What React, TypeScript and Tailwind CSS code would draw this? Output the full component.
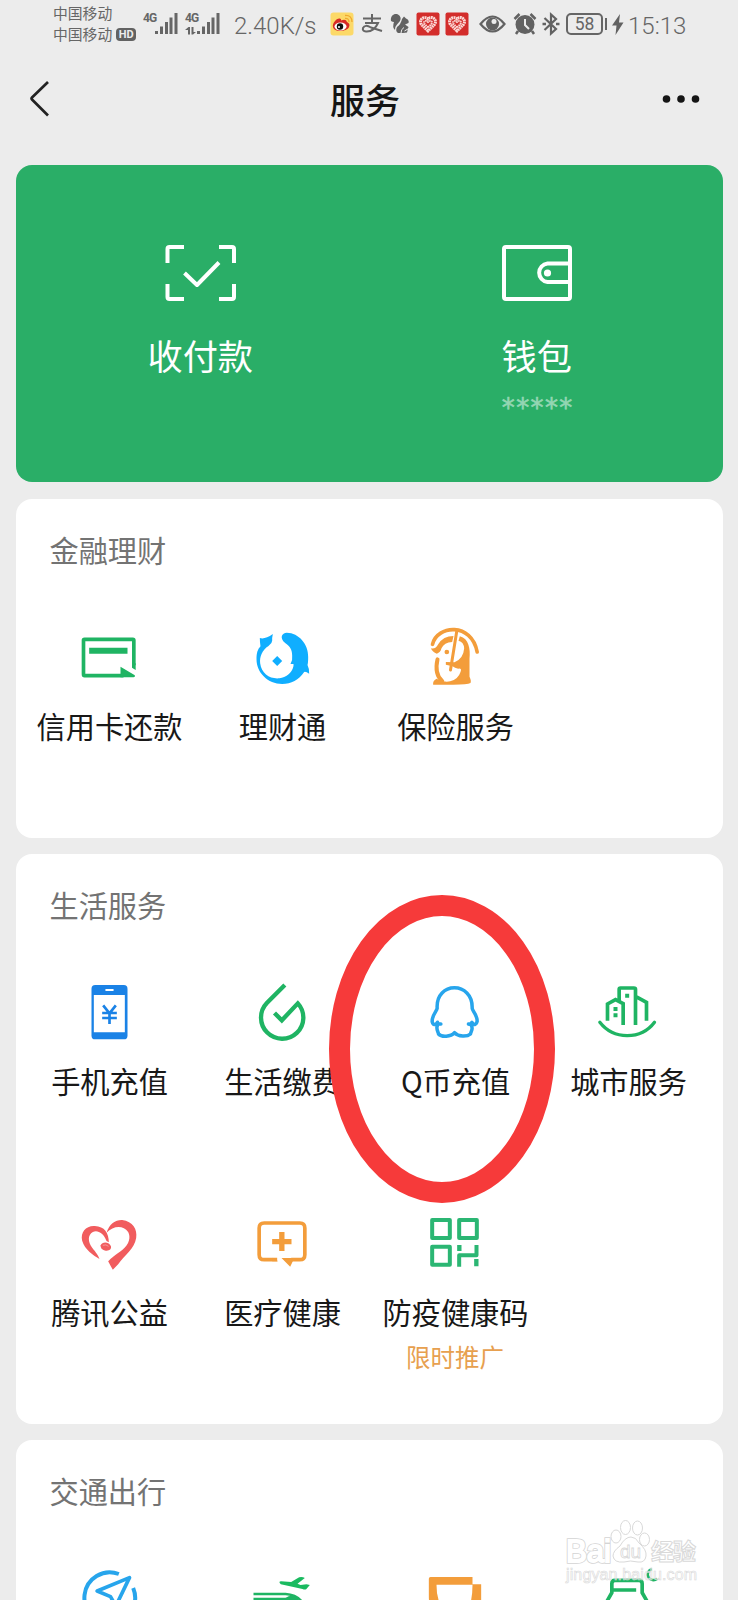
import type { ReactNode } from 'react';

interface IconProps {
    viewBox: string;
    children: ReactNode;
}

interface Service {
    id: string;
    name?: string;
    icon: ReactNode;
    note?: string;
}

interface SectionProps {
    title: string;
    items: Service[];
}

const GREEN = '#1fb463';
const ORANGE = '#f39d3b';
const BLUE = '#27a5ec';

function Icon({ viewBox, children }: IconProps) {
    return (
        <svg className="w-[72px] h-[72px] shrink-0" viewBox={viewBox} fill="none">
            {children}
        </svg>
    );
}

const finance: Service[] = [
    {
        id: 'credit',
        name: '信用卡还款',
        icon: (
            <Icon viewBox="160.5 63 216 216">
                <path d="M343 196V121q0-3-3-3H195q-3 0-3 3V223q0 4 3 4H312" stroke={GREEN} strokeWidth="11" />
                <path d="M209 143H324V161H209zM303 200L346 226Q348 232 342 232H303z" fill={GREEN} />
                <path d="M337.500 190V203L348.500 210V190z" fill={GREEN} />
            </Icon>
        ),
    },
    {
        id: 'licaitong',
        name: '理财通',
        icon: (
            <Icon viewBox="679.5 63 216 216">
                <path
                    d="M721 114Q736 119 760 102Q757 116 758 122Q758 130 747 138C728 150 720 170 722 190C726 222 752 238 780 235C800 232 815 220 820 205Q823 199 822 192L813 192Q820 180 818 167C818 147 811 140 797 129C779 114 787 98 802 98C838 99 867 132 866 171Q866 190 864 195Q869 204 869 221Q859 214 854 216C838 240 815 252 788 252C745 252 711 218 711 178C711 158 715 148 723 139Q721 128 721 114z"
                    fill="#10aeff"
                />
                <path d="M773 168L788 183L773 198L758 183z" fill="#10aeff" />
            </Icon>
        ),
    },
    {
        id: 'insurance',
        name: '保险服务',
        icon: (
            <Icon viewBox="148.5 63 216 216">
                <path d="M189 133C203 75 306 66 323 156" stroke={ORANGE} strokeWidth="11" strokeLinecap="round" />
                <path d="M262 92L243 210" stroke={ORANGE} strokeWidth="9" strokeLinecap="round" />
                <path d="M204 178Q194 222 218 243" stroke={ORANGE} strokeWidth="12" strokeLinecap="round" />
                <path
                    d="M184 145Q199 148 206 133Q221 108 252 108L248 126Q224 127 216 145Q213 158 202 161Q189 157 184 145z"
                    fill={ORANGE}
                />
                <path
                    d="M271 109C298 116 303 147 300 176V230Q306 242 303 249Q294 254 251 254H191Q189 242 201 236Q222 248 242 244Q266 238 273 216Q278 204 266 206Q256 205 249 199L229 194V186L255 187Q282 176 284 145Q283 126 267 122z"
                    fill={ORANGE}
                />
                <circle cx="232" cy="156" r="7" fill={ORANGE} />
            </Icon>
        ),
    },
];

const life: Service[] = [
    {
        id: 'phone',
        name: '手机充值',
        icon: (
            <Icon viewBox="130.5 48 216 216">
                <rect x="186" y="75" width="108" height="163" rx="11" fill="#1a82e6" />
                <path d="M193 105H286V217H193z" fill="#fff" />
                <path d="M230 90H250" stroke="#fff" strokeWidth="6" strokeLinecap="round" />
                <path d="M221 136L240 160L259 136M240 159V192M218 159H262M218 174H262" stroke="#1a82e6" strokeWidth="8" />
            </Icon>
        ),
    },
    {
        id: 'utilities',
        name: '生活缴费',
        icon: (
            <Icon viewBox="649.5 48 216 216">
                <path d="M766 75L712 129A63.500 63.500 0 1 0 805 130L757 181L735 159" stroke={GREEN} strokeWidth="13" />
            </Icon>
        ),
    },
    {
        id: 'qcoin',
        name: 'Q币充值',
        icon: (
            <Icon viewBox="118.5 48 216 216">
                <path
                    d="M184 192Q175 193 174 187Q163 201 158 185C157 166 172 153 173 145C168 63 281 63 278 145C278 153 293 162 293 184Q288 201 277 187Q275 194 267 192M174 196C168 207 177 216 177 222C186 232 214 231 225 218C236 231 263 231 273 222C273 216 283 207 275 196"
                    stroke={BLUE}
                    strokeWidth="10.5"
                    strokeLinecap="round"
                    strokeLinejoin="round"
                />
            </Icon>
        ),
    },
    {
        id: 'city',
        name: '城市服务',
        icon: (
            <Icon viewBox="637.5 48 216 216">
                <path d="M661 187Q692 227 743 227Q795 227 825 187" stroke={GREEN} strokeWidth="10" strokeLinecap="round" />
                <path
                    d="M684 182V132L708 119L731 131V195M719 121V88Q719 84 723 84H763Q768 84 768 88V195M768 109L801 127V182"
                    stroke={GREEN}
                    strokeWidth="11"
                />
                <path d="M737 101H749V113H737zM702 141H714V153H702zM702 160H714V172H702z" fill={GREEN} />
            </Icon>
        ),
    },
    {
        id: 'charity',
        name: '腾讯公益',
        icon: (
            <Icon viewBox="130.5 21 216 216">
                <path
                    d="M231 98C240 71 259 59 278 60C310 64 324 88 320 114C315 146 287 163 266 193L250 209Q244 200 236 184C244 174 261 163 279 149C300 132 304 111 296 96C281 75 252 77 231 98z"
                    fill="#f15c5e"
                />
                <path
                    d="M210 177C192 166 166 149 158 122C152 96 170 76 196 78C225 79 238 99 238 127L231 123C222 99 204 89 190 96C174 105 175 126 188 143C199 157 205 163 210 177z"
                    fill="#f15c5e"
                />
                <ellipse cx="229" cy="140" rx="16" ry="12" transform="rotate(15 229 140)" fill="#f15c5e" />
                <path d="M220 136Q230 132 237 139" stroke="#fbb5b5" strokeWidth="2" />
            </Icon>
        ),
    },
    {
        id: 'medical',
        name: '医疗健康',
        icon: (
            <Icon viewBox="649.5 21 216 216">
                <path
                    d="M743 179H704Q689 179 689 164V84Q689 69 704 69H811Q826 69 826 84V164Q826 179 811 179H785"
                    stroke={ORANGE}
                    strokeWidth="11"
                />
                <path d="M756 174H790V184L782 200zM730 173L746 184H728z" fill={ORANGE} />
                <path d="M749 96H765V117H786V133H765V153H749V133H728V117H749z" fill={ORANGE} />
            </Icon>
        ),
    },
    {
        id: 'healthcode',
        name: '防疫健康码',
        note: '限时推广',
        icon: (
            <Icon viewBox="178.5 51 216 216">
                <path d="M218 90H271V144H218zM299 90H352V144H299zM218 170H271V224H218z" stroke="#2bb673" strokeWidth="12" strokeLinejoin="round" />
                <path d="M299 230V196H351V165" stroke="#2bb673" strokeWidth="12" strokeLinejoin="round" />
                <path d="M293 165H306V183H293zM344 207H357V229H344z" fill="#2bb673" />
            </Icon>
        ),
    },
];

const travel: Service[] = [
    {
        id: 'trip',
        icon: (
            <Icon viewBox="130.5 306 216 216">
                <path d="M268 342A76 76 0 1 0 311 384" stroke={BLUE} strokeWidth="12" />
                <path d="M203 393L300 353L259 438L243 410z" stroke={BLUE} strokeWidth="11" strokeLinejoin="round" />
            </Icon>
        ),
    },
    {
        id: 'train',
        icon: (
            <Icon viewBox="649.5 306 216 216">
                <path d="M672 402H768Q802 404 820 428M672 417H778" stroke={GREEN} strokeWidth="7" />
                <path d="M768 414Q785 402 800 412L824 432H770z" fill={GREEN} />
                <path
                    d="M750 368Q749 364 755 364L785 366L809 352Q819 350 826 354L804 371L813 375L831 373L841 375L830 388Q825 390 819 387L754 373z"
                    fill="#1aba60"
                />
            </Icon>
        ),
    },
    {
        id: 'didi',
        icon: (
            <Icon viewBox="88.5 186 216 216">
                <path d="M123 231H249V253H275V300Q270 360 197 360Q118 360 118 290V236Q118 231 123 231zM141 254Q141 290 152 312Q165 338 197 338Q235 330 245 300Q249 280 249 254z" fill={ORANGE} fillRule="evenodd" />
            </Icon>
        ),
    },
    {
        id: 'hotel',
        icon: (
            <Icon viewBox="607.5 186 216 216">
                <path d="M650 308L667 278V251Q667 241 676 241H749Q758 241 758 251V278L775 308M667 270H740" stroke={GREEN} strokeWidth="11" />
                <path d="M787 207A17 17 0 1 0 803 236" stroke={GREEN} strokeWidth="8" />
            </Icon>
        ),
    },
];

function Signal() {
    return (
        <svg className="w-[24px] h-[22px]" viewBox="0 0 24 22" fill="#666">
            <path d="M1 18h3v3h-3zM6 13.500h3v7.500h-3zM11 9h3v12h-3zM15.500 4.500h3v16.500h-3zM20.500 0h3v21h-3z" />
        </svg>
    );
}

function CharityBadge() {
    return (
        <svg className="w-[24px] h-[24px]" viewBox="0 0 24 24">
            <rect x=".5" y=".5" width="23" height="23" rx="2" fill="#d32d2b" />
            <path d="M12 19L5.500 12.500C2.500 8.500 7 3 12 7C17 3 21.500 8.500 18.500 12.500z" fill="none" stroke="#fbd9d6" strokeWidth="3" strokeDasharray="1.800 .5" />
            <path d="M12 15.500L8.500 12C7 9.500 9.500 8 12 10C14.500 8 17 9.500 15.500 12z" fill="none" stroke="#fbd9d6" strokeWidth="2" strokeDasharray="1.500 .6" />
        </svg>
    );
}

function StatusBar() {
    return (
        <div className="flex items-start h-[48px] pl-[53px] text-[#666]">
            <div className="w-[90px] pt-[2px] text-[14.800px] leading-[21px] whitespace-nowrap">
                <div>中国移动</div>
                <div className="flex items-center">
                    <span>中国移动</span>
                    <span className="mt-px ml-[4px] w-[20px] h-[13px] rounded-[4px] bg-[#626262] text-[#ececec] text-[11px] leading-[13px] font-bold text-center font-['Roboto']">HD</span>
                </div>
            </div>
            <div className="flex w-[42px] pt-[13px]">
                <span className="w-[11px] text-[12px] leading-[10px] tracking-[-1px] font-bold font-['Roboto']">4G</span>
                <Signal />
            </div>
            <div className="flex w-[49px] pt-[13px]">
                <div className="w-[11px]">
                    <div className="text-[12px] leading-[10px] tracking-[-1px] font-bold font-['Roboto']">4G</div>
                    <svg className="mt-[4px] w-[11px] h-[8px]" viewBox="0 0 11 8" fill="#666">
                        <path d="M0 3L3.500 0H5V7.500H3V3zM6.500 0H8.500V5H11L8 7.500H6.500z" />
                    </svg>
                </div>
                <Signal />
            </div>
            <span className="w-[96px] pt-[11px] text-[24px] leading-[30px] font-light font-['Roboto'] whitespace-nowrap">2.40K/s</span>
            <svg className="mt-[12px] w-[24px] h-[24px]" viewBox="0 0 24 24">
                <rect x=".5" y=".5" width="23" height="23" rx="3" fill="#fcd968" />
                <path d="M3 15C2 11 7 5.500 10 6.500Q11.500 7 11 8.500Q16 6.500 17 10Q20.500 11.500 19 15C17 20 4 20.500 3 15z" fill="#d82b26" />
                <ellipse cx="10.500" cy="14.500" rx="6" ry="4" fill="#fff" />
                <circle cx="10" cy="14.500" r="3.200" fill="#111" />
                <circle cx="9" cy="15" r="1" fill="#fff" />
                <path d="M15 6.500Q19 6 19 10M15 3.500Q22 3 22 10" fill="none" stroke="#f0a82f" strokeWidth="1.300" />
            </svg>
            <svg className="mt-[14px] ml-[7px] w-[22px] h-[20px]" viewBox="0 0 22 20" fill="none" stroke="#666" strokeWidth="2">
                <path d="M2 4.500H20M11 0V8.500M4 9H17Q13 18 5 17.500Q1 17 2 14Q4 10 10 13.500L21 17" />
            </svg>
            <svg className="mt-[13px] ml-[7px] w-[20px] h-[21px]" viewBox="0 0 20 21" fill="#626262">
                <path d="M1 8C0 2 5 0 8 1.500Q12 4 10 8L7 11.500Q4.500 14 5 17Q2 14 4 9Q2.500 9 1 8z" />
                <path d="M12 6L14 3.500L16 5.500Q19.500 7 18.500 10L15 11.500L18.500 14L17 19.500L13 20H8Q5 18 7 14Q11 11 12 6z" />
                <path d="M11 20Q11 16 14 14.500M14.500 18L19.500 15" fill="none" stroke="#ececec" strokeWidth="1" />
            </svg>
            <div className="mt-[12px] ml-[6px] flex gap-[5px]">
                <CharityBadge />
                <CharityBadge />
            </div>
            <svg className="mt-[14px] ml-[10px] w-[27px] h-[20px]" viewBox="0 0 27 20">
                <path d="M1.500 10Q13.500-5 25.500 10Q13.500 25 1.500 10z" fill="none" stroke="#626262" strokeWidth="2.200" />
                <circle cx="13.500" cy="10" r="6.500" fill="#626262" />
                <circle cx="15" cy="7.500" r="2.500" fill="#ececec" />
            </svg>
            <svg className="mt-[12px] ml-[7px] w-[24px] h-[24px]" viewBox="0 0 24 24">
                <circle cx="12" cy="12.500" r="9.500" fill="#626262" />
                <path d="M1.500 7L6.500 2M22.500 7L17.500 2M5 19L3 22M19 19L21 22" stroke="#626262" strokeWidth="2.500" />
                <path d="M12 7V13L16 17" fill="none" stroke="#ececec" strokeWidth="2" />
            </svg>
            <svg className="mt-[12px] ml-[5px] w-[18px] h-[24px]" viewBox="0 0 18 24" fill="none" stroke="#626262" strokeWidth="2.200">
                <path d="M2.500 6L14 17L9 21.500V2.500L14 7L2.500 18" />
                <path d="M.5 12H4M14 12H17.500" strokeWidth="2.500" />
            </svg>
            <div className="mt-[13px] ml-[6px] w-[37px] h-[22px] rounded-[5px] border-2 border-[#666] text-[17.500px] leading-[19px] text-center font-['Roboto']">58</div>
            <div className="mt-[18px] ml-[2px] w-[2px] h-[12px] bg-[#666]" />
            <svg className="mt-[14px] ml-[5px] w-[12px] h-[21px]" viewBox="0 0 12 21" fill="#626262">
                <path d="M8 0L0 11.500H4.500L3.500 21L11.500 8.500H7z" />
            </svg>
            <span className="ml-[4px] pt-[11px] text-[24px] leading-[30px] font-light font-['Roboto']">15:13</span>
        </div>
    );
}

function NavBar() {
    return (
        <div className="flex items-center justify-between h-[102px] pl-[29px] pr-[37px]">
            <svg className="w-[42px] h-[36px]" viewBox="0 0 42 36" fill="none">
                <path d="M19 1L3 16.500Q2 17.500 3 18.500L19 34.500" stroke="#222" strokeWidth="2.700" />
            </svg>
            <h1 className="-mt-px text-[35px] leading-[44px] font-medium text-[#151515]">服务</h1>
            <svg className="w-[42px] h-[10px]" viewBox="0 0 42 10" fill="#151515">
                <circle cx="7.500" cy="5" r="3.800" />
                <circle cx="22" cy="5" r="3.800" />
                <circle cx="36.500" cy="5" r="3.800" />
            </svg>
        </div>
    );
}

function PayCard() {
    return (
        <div className="flex h-[317px] px-[17px] pt-[80px] rounded-[16px] bg-[#2aae67] text-white">
            <div className="flex-1 flex flex-col items-center">
                <svg className="w-[72px] h-[57px]" viewBox="0 0 72 57" fill="none" stroke="#fff" strokeWidth="4">
                    <path d="M2.500 18V4Q2.500 2 4.500 2H19M54 2H67Q69 2 69 4V18M69 39V52Q69 54 67 54H54M19 54H4.500Q2.500 54 2.500 52V39" />
                    <path d="M19.500 28L32 40L54 17.500" strokeLinejoin="round" />
                </svg>
                <div className="mt-[29px] -ml-px text-[35.200px] leading-[48px]">收付款</div>
            </div>
            <div className="flex-1 flex flex-col items-center">
                <svg className="w-[72px] h-[57px]" viewBox="0 0 72 57" fill="none" stroke="#fff" strokeWidth="4">
                    <rect x="3" y="2" width="66" height="52" rx="2" />
                    <path d="M69 18.500H46.500A9.300 9.300 0 0 0 46.500 37H69" />
                    <circle cx="46.500" cy="28" r="3.600" fill="#fff" stroke="none" />
                </svg>
                <div className="mt-[29px] -ml-px text-[35.200px] leading-[48px]">钱包</div>
                <div className="mt-[11px] pl-[1px] text-[26px] leading-[36px] tracking-[1.400px] text-[#94d6b3] [-webkit-text-stroke:0.6px_#94d6b3] font-['DejaVu_Sans']">*****</div>
            </div>
        </div>
    );
}

function Section({ title, items }: SectionProps) {
    return (
        <section className="rounded-[16px] bg-white pl-[7px] pr-[8px] pb-1">
            <h2 className="flex items-center h-[104px] pb-[3px] pl-[27px] text-[29.200px] text-[#737373]">{title}</h2>
            <div className="grid grid-cols-4 auto-rows-[231px]">
                {items.map((item) => (
                    <div key={item.id} className="flex flex-col items-center pt-[18px]">
                        {item.icon}
                        {item.name && <span className="mt-[12px] pl-px text-[29.200px] leading-[40px] text-[#181818] whitespace-nowrap">{item.name}</span>}
                        {item.note && <span className="mt-[10px] text-[24.500px] leading-[32px] text-[#e7a04f]">{item.note}</span>}
                    </div>
                ))}
            </div>
        </section>
    );
}

function Watermark() {
    return (
        <svg className="absolute left-[560px] top-[1515px] w-[145px] h-[75px]" viewBox="0 0 145 75" fill="#fff" stroke="#d9d9d9" strokeWidth="1">
            <g fontFamily="Liberation Sans, Noto Sans CJK SC, sans-serif" fontWeight="700">
                <text x="6" y="46.500" fontSize="31" fontWeight="400" textLength="45" lengthAdjust="spacingAndGlyphs" stroke="#d4d4d4" strokeWidth="3.400">Bai</text>
                <text x="6" y="46.500" fontSize="31" fontWeight="400" textLength="45" lengthAdjust="spacingAndGlyphs" stroke="#fff" strokeWidth="1.800">Bai</text>
                <ellipse cx="56" cy="21.500" rx="5" ry="6.500" />
                <ellipse cx="65.500" cy="12.500" rx="5" ry="7" />
                <ellipse cx="77.500" cy="13" rx="5" ry="7" />
                <ellipse cx="84.500" cy="24.500" rx="5" ry="6.500" />
                <path d="M71 22Q76 22 79 28Q87 35 86 41Q85 48 78 47Q70 45 64 47Q54 48 53 41Q53 36 60 31Q65 22 71 22z" />
                <text x="60" y="43" fontSize="19" fontWeight="400" strokeWidth=".8">du</text>
                <text x="91" y="45" fontSize="23" textLength="45">经验</text>
                <text x="6" y="65" fontSize="16" strokeWidth=".6" fontWeight="400" fillOpacity=".4" textLength="131">jingyan.baidu.com</text>
            </g>
        </svg>
    );
}

export default function App() {
    return (
        <div className="relative w-[738px] h-[1600px] overflow-hidden bg-[#ececec] font-['Noto_Sans_CJK_SC',sans-serif]">
            <StatusBar />
            <NavBar />
            <main className="px-[15.500px] pt-[15px]">
                <PayCard />
                <div className="mt-[17px] flex flex-col gap-[16px]">
                    <Section title="金融理财" items={finance} />
                    <Section title="生活服务" items={life} />
                    <Section title="交通出行" items={travel} />
                </div>
            </main>

            {/* Hand-drawn marker around Q币充值 */}
            <svg className="absolute left-[328px] top-[894px] w-[228px] h-[310px]" viewBox="0 0 228 310" fill="none">
                <ellipse cx="114" cy="155" rx="102.500" ry="143.500" stroke="#f63a3a" strokeWidth="21" />
            </svg>
            <Watermark />
        </div>
    );
}
